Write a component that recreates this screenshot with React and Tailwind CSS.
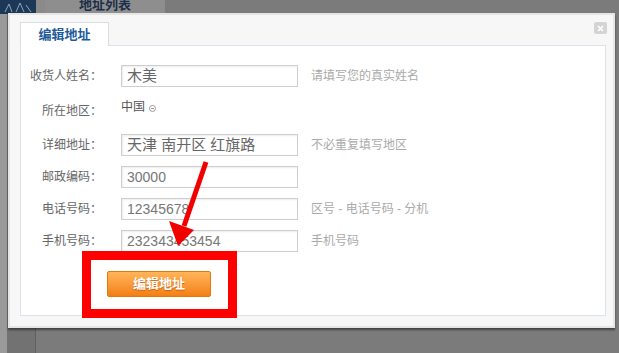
import React from "react";

const font = { fontFamily: '"Liberation Sans", "Noto Sans CJK SC", sans-serif' };

function Row({ label, value, hint, big }) {
  return (
    <div className="flex items-center h-[22px]">
      <div className="w-[81px] text-right text-[12px] text-[#666]">{label}</div>
      <div className="ml-[19px] w-[177px] h-[22px] border border-[#cfcfcf] shadow-[inset_1px_1px_2px_rgba(0,0,0,0.08)] flex items-center pl-[5px]">
        <span className={big ? "text-[15px] text-[#666]" : "text-[14px] text-[#777]"}>{value}</span>
      </div>
      {hint && <div className="ml-[13px] text-[12px] text-[#aaa]">{hint}</div>}
    </div>
  );
}

export default function App() {
  return (
    <div className="relative w-[619px] h-[353px] overflow-hidden bg-[#7b7b7b]" style={font}>
      {/* page behind the overlay */}
      <div className="flex h-[14px]">
        <div className="w-[36px] bg-[#1d3756] flex items-center justify-center">
          <svg width="30" height="12" viewBox="0 0 30 12">
            <path d="M2 11 L6 3 L9 11 M13 11 L17 2 L21 11 M23 4 L28 11" stroke="#8fa4bd" strokeWidth="1" fill="none" />
          </svg>
        </div>
        <div className="w-[9px] bg-[#8a8a8a]" />
        <div className="w-[120px] bg-[#8e8e8e] flex justify-center">
          <span className="text-[13px] font-bold text-[#1c2e4a] leading-[12px] -mt-[1px]">地址列表</span>
        </div>
        <div className="flex-1 bg-[#7b7b7b]" />
      </div>
      <div className="flex h-[339px]">
        <div className="w-[7px] bg-[#9a9a9a]" />
        <div className="w-[29px] bg-[#727272] border-r border-[#5f5f5f]" />
        <div className="flex-1" />
      </div>

      {/* dialog */}
      <div className="absolute left-[8px] top-[13px] w-[607px] h-[315px] bg-[#f7f7f7] border-2 border-[#e6e6e6] shadow-[0_2px_2px_rgba(0,0,0,0.45)]">
        <div className="absolute right-[6px] top-[7px] w-[13px] h-[12px] rounded-[2px] bg-[#d4d4d4] flex items-center justify-center">
          <svg width="7" height="7" viewBox="0 0 7 7">
            <path d="M1 1 L6 6 M6 1 L1 6" stroke="#fff" strokeWidth="1.6" />
          </svg>
        </div>
        <div className="ml-[10px] mt-[7px] w-[586px]">
          <div className="relative z-10 w-[89px] h-[24px] bg-white border border-b-0 border-[#d9dde3] flex items-center justify-center">
            <span className="text-[13px] font-bold text-[#1f5b9b]">编辑地址</span>
          </div>
          <div className="-mt-[1px] h-[271px] bg-white border border-[#dde3ea] pt-[19px]">
            <Row label="收货人姓名：" value="木美" hint="请填写您的真实姓名" big />
            <div className="flex items-center h-[22px] mt-[10px]">
              <div className="w-[81px] text-right text-[12px] text-[#666] pt-[6px]">所在地区：</div>
              <div className="ml-[19px] flex items-center -mt-[2px]">
                <span className="text-[12px] text-[#555]">中国</span>
                <span className="ml-[4px] mt-[3px] w-[7px] h-[7px] rounded-full border border-[#999] flex items-center justify-center">
                  <span className="w-[3px] h-[1px] bg-[#999]" />
                </span>
              </div>
            </div>
            <div className="mt-[15px] flex flex-col gap-[10px]">
              <Row label="详细地址：" value="天津 南开区 红旗路" hint="不必重复填写地区" big />
              <Row label="邮政编码：" value="30000" />
              <Row label="电话号码：" value="12345678" hint="区号 - 电话号码 - 分机" />
              <Row label="手机号码：" value="232343453454" hint="手机号码" />
            </div>
            <div className="mt-[19px] ml-[86px] w-[104px] h-[26px] rounded-[2px] border border-[#e07a10] bg-gradient-to-b from-[#ffb558] to-[#f47f0e] flex items-center justify-center">
              <span className="text-[13px] font-bold text-white [text-shadow:0_1px_1px_rgba(160,70,0,0.6)]">编辑地址</span>
            </div>
          </div>
        </div>
      </div>

      {/* annotation */}
      <div className="absolute left-[82px] top-[251px] w-[155px] h-[67px] border-[9px] border-[#ff0000]" />
      <svg className="absolute left-0 top-0" width="619" height="353" viewBox="0 0 619 353">
        <line x1="206" y1="162" x2="184" y2="226" stroke="#f20000" strokeWidth="5" />
        <polygon points="169,221 194,230 178,246" fill="#f20000" />
      </svg>
    </div>
  );
}
